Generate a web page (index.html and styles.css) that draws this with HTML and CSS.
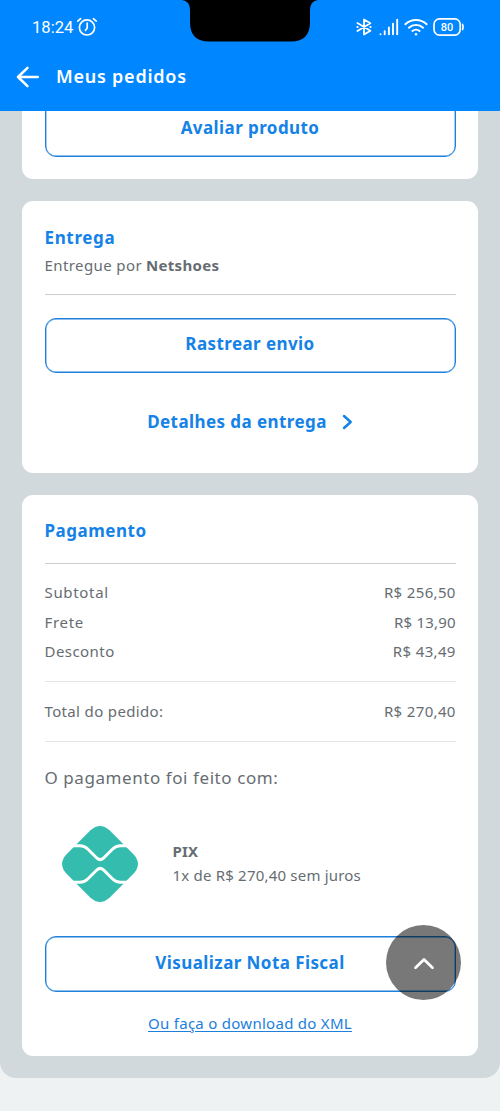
FILE: index.html
```html
<!DOCTYPE html>
<html lang="pt-BR">
<head>
<meta charset="utf-8">
<title>Meus pedidos</title>
<link rel="stylesheet" href="styles.css">
</head>
<body>
<header class="topbar">
  <div class="status">
    <span class="clock">18:24</span>
    <svg class="alarm" width="22" height="20" viewBox="0 0 22 20" fill="none" stroke="currentColor" stroke-width="1.7" stroke-linecap="round"><circle cx="11" cy="10.4" r="7.6"/><path d="M11.2 6v5l-1.8 2.4M1.8 4.2 4.6 1.7M20.2 4.2l-2.8-2.5"/></svg>
    <svg class="bluetooth" width="16" height="18" viewBox="0 0 16 18" fill="none" stroke="currentColor" stroke-width="1.8" stroke-linejoin="round" stroke-linecap="round"><path d="M1.4 5 14.400 12.800 8 16.600V1.400l6.400 3.800L1.400 13"/><path d="M1.300 9h.4M14.300 9h.4"/></svg>
    <svg class="signal" width="20" height="18" viewBox="0 0 20 18" fill="none" stroke="currentColor" stroke-width="1.9" stroke-linecap="round"><path d="M1.500 16.100v.1M5.700 13.200v3M9.900 9.500v6.700M14 5.600v10.600M18.200 1.600v14.600"/></svg>
    <svg class="wifi" width="24" height="18" viewBox="0 0 24 18" fill="none" stroke="currentColor" stroke-width="1.9" stroke-linecap="round"><path d="M1.300 6.200a15.600 15.600 0 0 1 21.400 0M4.900 9.700a10.400 10.400 0 0 1 14.200 0M8.400 13a5.500 5.500 0 0 1 7.200 0"/><circle cx="12" cy="16.200" r="1.200" fill="currentColor" stroke="none"/></svg>
    <div class="battery"><svg width="32" height="18" viewBox="0 0 32 18" fill="none" stroke="currentColor" stroke-width="1.700" stroke-linecap="round"><rect x="1" y=".9" width="26.200" height="16.200" rx="5.500"/><path d="M29.600 6.500q1 2.500 0 5"/></svg><span>80</span></div>
  </div>
  <div class="notch"><svg width="136" height="42" viewBox="0 0 136 42"><path d="M0 0h136q-8 1-8 10v12q0 19.500-19 19.500H27Q8 41.500 8 22V10Q8 1 0 0z"/></svg></div>
  <div class="titlebar">
    <svg width="24" height="22" viewBox="0 0 24 22" fill="none" stroke="currentColor" stroke-width="2.500" stroke-linecap="round" stroke-linejoin="round"><path d="M11.500 1.800 2 11l9.500 9.200M2 11h19.800"/></svg>
    <h1>Meus pedidos</h1>
  </div>
</header>
<main class="panel">
  <section class="card card-review">
    <a class="button open-top"><span class="t-review">Avaliar produto</span></a>
  </section>
  <section class="card card-delivery">
    <h2 class="t-delivery">Entrega</h2>
    <p class="seller"><span class="t-by">Entregue por</span> <b class="t-seller">Netshoes</b></p>
    <hr>
    <a class="button"><span class="t-track">Rastrear envio</span></a>
    <a class="details"><span class="t-details">Detalhes da entrega</span>
      <svg width="11" height="16" viewBox="0 0 11 16" fill="none" stroke="currentColor" stroke-width="2.500" stroke-linecap="round" stroke-linejoin="round"><path d="M2 2l6.700 6L2 14"/></svg></a>
  </section>
  <section class="card card-payment">
    <h2 class="t-payment">Pagamento</h2>
    <hr>
    <dl class="amounts">
      <div><dt class="t-subtotal">Subtotal</dt><dd>R$ 256,50</dd></div>
      <div><dt class="t-freight">Frete</dt><dd class="t-freight-value">R$ 13,90</dd></div>
      <div><dt class="t-discount">Desconto</dt><dd>R$ 43,49</dd></div>
    </dl>
    <dl class="total"><div><dt class="t-total">Total do pedido:</dt><dd>R$ 270,40</dd></div></dl>
    <p class="paid-with"><span class="t-paid">O pagamento foi feito com:</span></p>
    <div class="method">
      <svg width="76" height="76" viewBox="0 0 76 76"><path fill="#34bcae" d="M28.500 4.300q9.500-8.500 19 0L71.700 28.500q8.500 9.500 0 19L47.500 71.700q-9.500 8.500-19 0L4.300 47.500q-8.500-9.500 0-19z"/><g fill="none" stroke="#fff" stroke-width="3"><path d="M11 19.700h7q4.500 0 8 3.500L35 32.200q3.200 3 6.400 0l9-9q3.600-3.500 8.100-3.500H65"/><path d="M11 56.300h7q4.500 0 8-3.500L35 43.800q3.200-3 6.400 0l9 9q3.600 3.500 8.100 3.500H65"/></g></svg>
      <div class="method-text"><b class="t-pix">PIX</b><span class="t-installment">1x de R$ 270,40 sem juros</span></div>
    </div>
    <a class="button"><span class="t-invoice">Visualizar Nota Fiscal</span></a>
    <a class="download"><span class="t-xml">Ou faça o download do XML</span></a>
  </section>
</main>
<button class="to-top" aria-label="Voltar ao topo"><svg width="24" height="16" viewBox="0 0 24 16" fill="none" stroke="#fff" stroke-width="2.700" stroke-linecap="round" stroke-linejoin="round"><path d="M3.500 12.800 12 4.500l8.500 8.300"/></svg></button>
</body>
</html>
```

FILE: styles.css
```css
* { box-sizing: border-box; margin: 0; padding: 0; }
body {
  position: relative;
  width: 500px;
  height: 1111px;
  overflow: hidden;
  background: #eef2f3;
  color: #666d72;
  font: 15px/24px "Noto Sans", sans-serif;
}
svg { display: block; flex: none; }
.topbar { position: relative; height: 111px; background: #0086ff; color: #fff; }
.status { display: flex; align-items: center; height: 54px; padding-left: 32px; }
.clock { width: 44px; padding-top: 2px; font: 16.6px/20px Roboto, sans-serif; }
.bluetooth { margin-left: 258px; }
.signal { margin-left: 7px; }
.wifi { margin-left: 5px; }
.battery { display: grid; margin-left: 5px; }
.battery > * { grid-area: 1 / 1; }
.battery span { width: 28px; font: 500 11px/19px Roboto, sans-serif; text-align: center; }
.notch { position: absolute; left: 182px; top: 0; }
.titlebar { display: flex; align-items: center; gap: 16px; height: 46px; padding-left: 16px; }
h1 { margin-top: -2px; font-size: 18px; line-height: 24px; font-weight: 600; letter-spacing: .76px; }
.panel { height: 967px; padding: 0 22px; background: #d2d9dc; border-radius: 0 0 16px 16px; }
.card { padding: 0 22.5px; background: #fff; border-radius: 11px; }
.card-review { display: flow-root; overflow: hidden; height: 68px; border-radius: 0 0 11px 11px; }
.card-delivery { height: 272px; margin-top: 22px; padding-top: 24.5px; }
.card-payment { height: 561px; margin-top: 22px; padding-top: 24px; }
h2 { color: #1482e6; font-size: 17px; line-height: 24px; }
.button {
  display: flex;
  align-items: center;
  justify-content: center;
  height: 55.5px;
  border: 1px solid #1c80dc;
  box-shadow: inset 0 0 0 .4px #1c80dc;
  border-radius: 11px;
  color: #1482e6;
  font-size: 17px;
  font-weight: 700;
}
.button span { margin-top: -2px; }
.open-top { height: 55.5px; margin-top: -10px; }
.seller { margin-top: 3px; }
hr { height: 1px; border: 0; background: #c8ced2; }
.seller + hr { margin: 17.5px 0 22.5px; }
.details { display: flex; align-items: center; justify-content: center; gap: 15px; height: 24px; margin-top: 37px; color: #1482e6; font-size: 17px; font-weight: 700; }
.card-payment hr { margin-top: 20px; }
.amounts { display: grid; gap: 5.5px; padding: 16px 0 18px; border-bottom: 1px solid #e2e5e6; }
dl div { display: flex; justify-content: space-between; }
dd { margin-right: -.3px; letter-spacing: .35px; }
.total { padding: 17px 0 18px; border-bottom: 1px solid #e2e5e6; }
.paid-with { margin-top: 24px; font-size: 17px; }
.method { display: flex; align-items: center; gap: 34.5px; height: 76px; margin: 36px 0 34px; padding-left: 17.5px; }
.method-text { display: grid; margin-top: -2px; }
.download { display: flex; justify-content: center; margin-top: 19px; color: #1c80dc; text-decoration: underline; text-underline-offset: 2px; }

/* Tracking per label */
.t-review, .t-track, .t-details, .t-invoice { letter-spacing: .42px; }
.t-delivery { letter-spacing: .65px; }
.t-by { letter-spacing: .4px; }
.t-seller { letter-spacing: .32px; }
.t-payment { letter-spacing: .52px; }
.t-subtotal, .t-freight { letter-spacing: .68px; }
.t-discount { letter-spacing: .44px; }
.t-freight-value { letter-spacing: .2px; }
.t-total { letter-spacing: .35px; }
.t-paid { letter-spacing: .57px; }
.t-pix { letter-spacing: .2px; }
.t-installment { letter-spacing: .2px; }
.t-xml { letter-spacing: .28px; }

.to-top {
  position: absolute;
  left: 386px;
  top: 925px;
  display: grid;
  place-items: center;
  width: 75px;
  height: 75px;
  border: 0;
  border-radius: 50%;
  background: rgba(0, 0, 0, .53);
}
```
